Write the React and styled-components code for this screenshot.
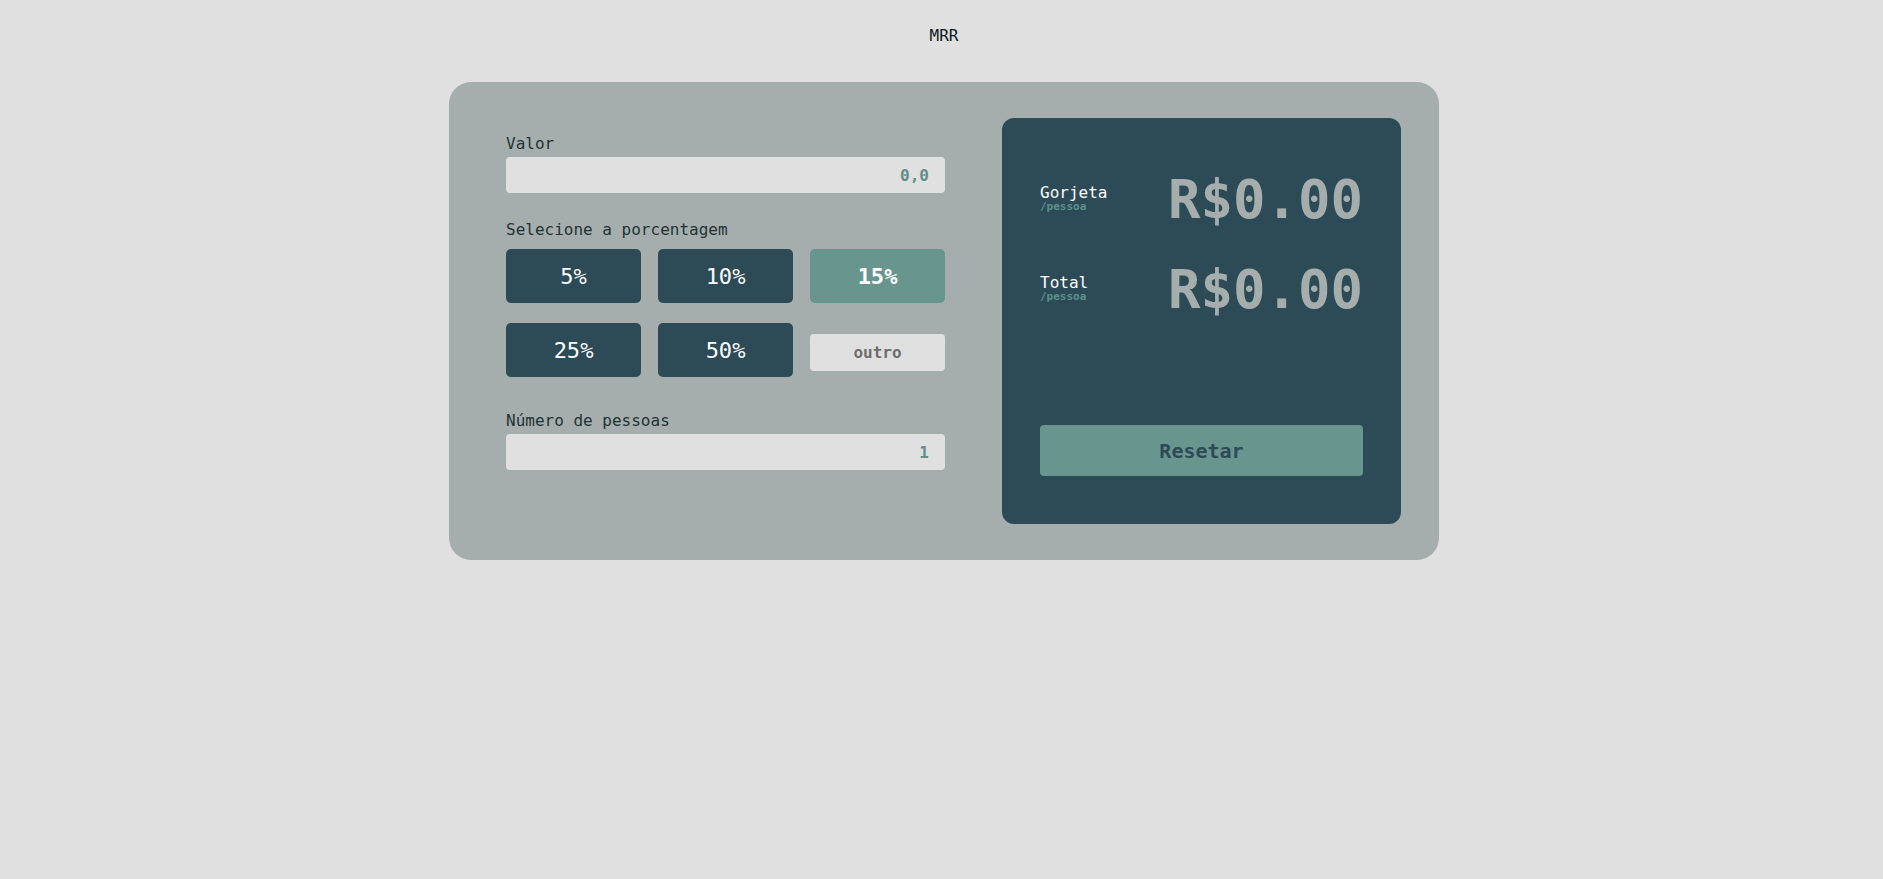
import React from "react";
import styled, { createGlobalStyle } from "styled-components";

const GlobalStyle = createGlobalStyle`
  * {
    box-sizing: border-box;
  }
  body {
    margin: 0;
    background-color: #e0e0e0;
    font-family: "DejaVu Sans Mono", "Liberation Mono", monospace;
  }
`;

const Page = styled.main`
  min-height: 100vh;
  padding-top: 26px;
  display: flex;
  flex-direction: column;
  align-items: center;
`;
const Title = styled.h1`
  margin: 0 0 37px 5px;
  font-size: 16px;
  line-height: 19px;
  font-weight: 400;
  color: #0d1a22;
`;
const Card = styled.section`
  width: 990px;
  margin-left: 5px;
  display: grid;
  grid-template-columns: 439px 399px;
  column-gap: 57px;
  padding: 36px 38px 36px 57px;
  background-color: #a5aead;
  border-radius: 22px;
`;

///////////////////////////////////////////////////////////////////

const Form = styled.div`
  padding-top: 16px;
  display: flex;
  flex-direction: column;
`;
const Label = styled.label`
  display: block;
  font-size: 16px;
  line-height: 19px;
  color: #1f3434;
  margin-top: ${(p) => p.top || 0}px;
  margin-bottom: ${(p) => p.bottom || 4}px;
`;
const Field = styled.input`
  width: 100%;
  height: 36px;
  border: none;
  outline: none;
  border-radius: 4px;
  background-color: #e0e0e0;
  padding: 0 16px;
  text-align: right;
  font-family: inherit;
  font-size: 16px;
  font-weight: bold;
  color: #5e8f8b;
  &::placeholder {
    color: #5e8f8b;
    opacity: 1;
  }
`;
const Percentages = styled.div`
  display: grid;
  grid-template-columns: repeat(3, 1fr);
  grid-auto-rows: 54px;
  gap: 20px 17px;
`;
const Pct = styled.button`
  border: none;
  border-radius: 5px;
  background-color: ${(p) => (p.active ? "#68968f" : "#2c4b57")};
  color: #fff;
  font-family: inherit;
  font-size: 22px;
  font-weight: ${(p) => (p.active ? "bold" : "normal")};
  cursor: pointer;
`;
const Other = styled.input`
  align-self: end;
  margin-bottom: 6px;
  height: 37px;
  width: 100%;
  border: none;
  outline: none;
  border-radius: 4px;
  background-color: #e0e0e0;
  text-align: center;
  font-family: inherit;
  font-size: 16px;
  font-weight: bold;
  color: #6e6e6e;
  &::placeholder {
    color: #6e6e6e;
    opacity: 1;
  }
`;

///////////////////////////////////////////////////////////////////

const Panel = styled.div`
  min-height: 406px;
  background-color: #2c4b57;
  border-radius: 12px;
  padding: 50px 38px 48px 38px;
  display: flex;
  flex-direction: column;
`;
const Result = styled.div`
  display: flex;
  justify-content: space-between;
  align-items: center;
  & + & {
    margin-top: 27px;
  }
`;
const ResultName = styled.p`
  margin: -3px 0 0;
  font-size: 16px;
  line-height: 17px;
  color: #fff;
`;
const Per = styled.span`
  display: block;
  font-size: 11px;
  line-height: 12px;
  font-weight: bold;
  color: #5e8f8b;
`;
const Amount = styled.p`
  margin: 0;
  font-size: 54px;
  font-weight: bold;
  color: #a5aead;
`;
const Reset = styled.button`
  margin-top: auto;
  height: 51px;
  border: none;
  border-radius: 4px;
  background-color: #68968f;
  color: #2c4b57;
  font-family: inherit;
  font-size: 20px;
  font-weight: bold;
  cursor: pointer;
`;

const percentages = [5, 10, 15, 25, 50];

const App = () => {
  return (
    <>
      <GlobalStyle />
      <Page>
        <Title>MRR</Title>
        <Card>
          <Form>
            <Label htmlFor="valor">Valor</Label>
            <Field id="valor" placeholder="0,0" />
            <Label top={27} bottom={10}>
              Selecione a porcentagem
            </Label>
            <Percentages>
              {percentages.map((p) => (
                <Pct key={p} active={p === 15}>
                  {p}%
                </Pct>
              ))}
              <Other placeholder="outro" />
            </Percentages>
            <Label htmlFor="pessoas" top={34}>
              Número de pessoas
            </Label>
            <Field id="pessoas" placeholder="1" />
          </Form>
          <Panel>
            <Result>
              <ResultName>
                Gorjeta
                <Per>/pessoa</Per>
              </ResultName>
              <Amount>R$0.00</Amount>
            </Result>
            <Result>
              <ResultName>
                Total
                <Per>/pessoa</Per>
              </ResultName>
              <Amount>R$0.00</Amount>
            </Result>
            <Reset>Resetar</Reset>
          </Panel>
        </Card>
      </Page>
    </>
  );
};

export default App;
